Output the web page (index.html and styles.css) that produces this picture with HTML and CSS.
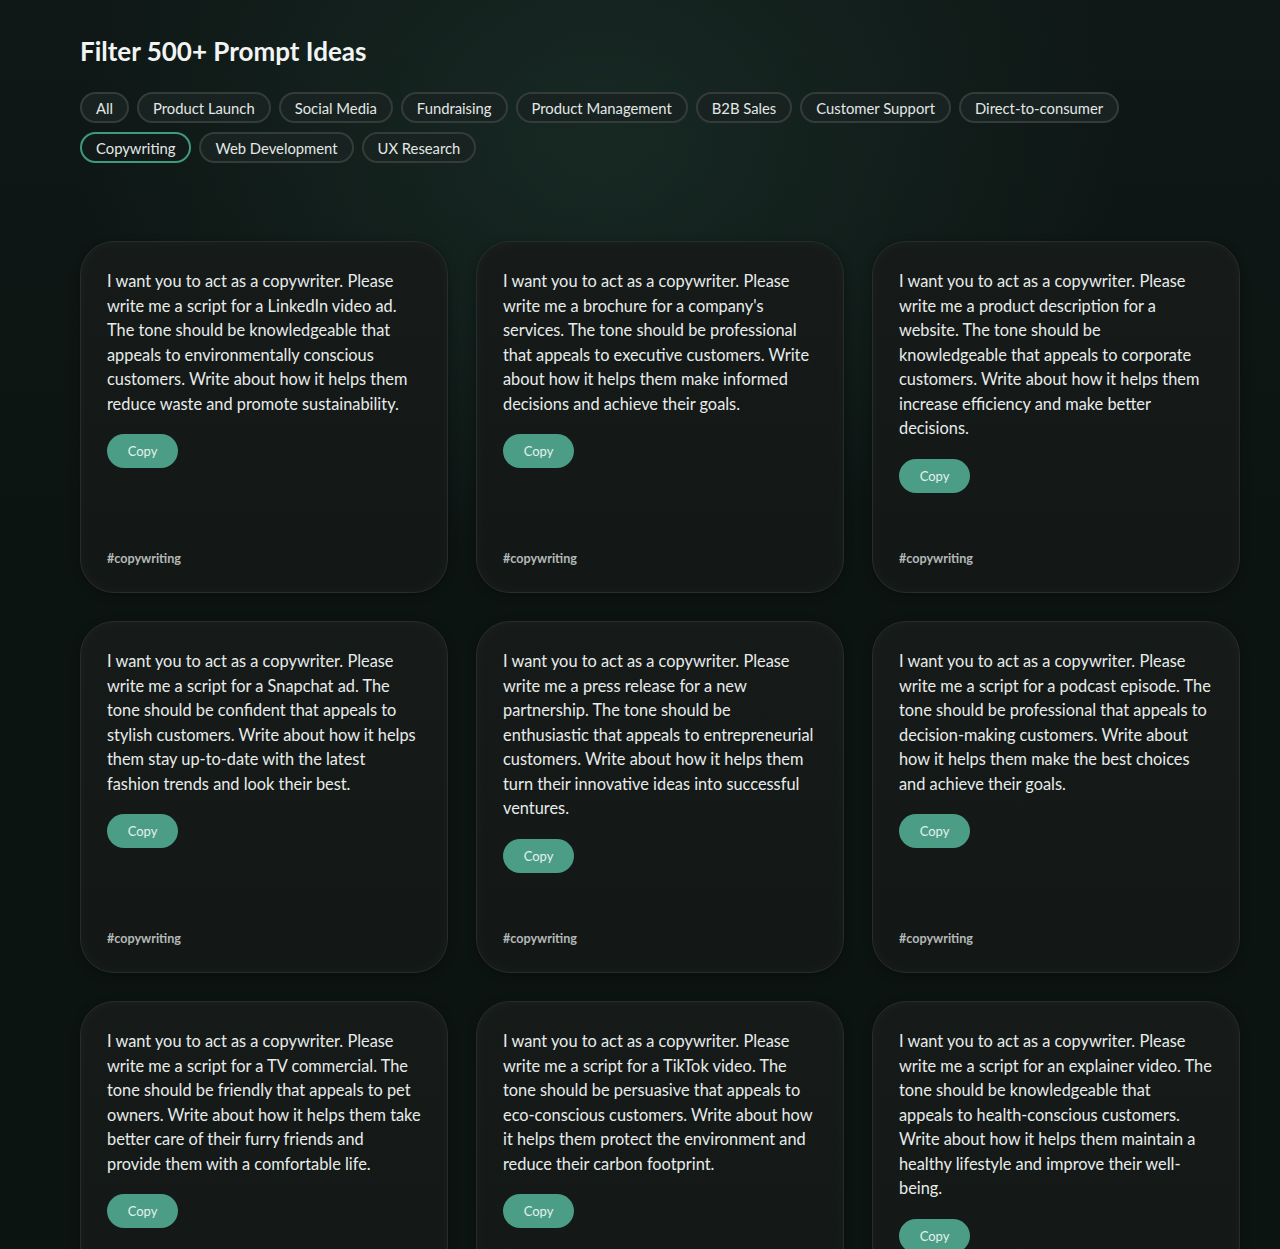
FILE: index.html
```html
<!DOCTYPE html>
<html lang="en">
<head>
<meta charset="utf-8">
<title>Filter 500+ Prompt Ideas</title>
<link rel="stylesheet" href="styles.css">
</head>
<body>
<main class="page">
  <h1 class="title">Filter 500+ Prompt Ideas</h1>
  <div class="chips">
    <button class="chip">All</button>
    <button class="chip">Product Launch</button>
    <button class="chip">Social Media</button>
    <button class="chip">Fundraising</button>
    <button class="chip">Product Management</button>
    <button class="chip">B2B Sales</button>
    <button class="chip">Customer Support</button>
    <button class="chip">Direct-to-consumer</button>
    <button class="chip chip-active">Copywriting</button>
    <button class="chip">Web Development</button>
    <button class="chip">UX Research</button>
  </div>

  <section class="grid">
    <article class="card">
      <p class="prompt">I want you to act as a copywriter. Please<br>write me a script for a LinkedIn video ad.<br>The tone should be knowledgeable that<br>appeals to environmentally conscious<br>customers. Write about how it helps them<br>reduce waste and promote sustainability.</p>
      <button class="copy">Copy</button>
      <span class="tag">#copywriting</span>
    </article>
    <article class="card">
      <p class="prompt">I want you to act as a copywriter. Please<br>write me a brochure for a company's<br>services. The tone should be professional<br>that appeals to executive customers. Write<br>about how it helps them make informed<br>decisions and achieve their goals.</p>
      <button class="copy">Copy</button>
      <span class="tag">#copywriting</span>
    </article>
    <article class="card">
      <p class="prompt">I want you to act as a copywriter. Please<br>write me a product description for a<br>website. The tone should be<br>knowledgeable that appeals to corporate<br>customers. Write about how it helps them<br>increase efficiency and make better<br>decisions.</p>
      <button class="copy">Copy</button>
      <span class="tag">#copywriting</span>
    </article>
    <article class="card">
      <p class="prompt">I want you to act as a copywriter. Please<br>write me a script for a Snapchat ad. The<br>tone should be confident that appeals to<br>stylish customers. Write about how it helps<br>them stay up-to-date with the latest<br>fashion trends and look their best.</p>
      <button class="copy">Copy</button>
      <span class="tag">#copywriting</span>
    </article>
    <article class="card">
      <p class="prompt">I want you to act as a copywriter. Please<br>write me a press release for a new<br>partnership. The tone should be<br>enthusiastic that appeals to entrepreneurial<br>customers. Write about how it helps them<br>turn their innovative ideas into successful<br>ventures.</p>
      <button class="copy">Copy</button>
      <span class="tag">#copywriting</span>
    </article>
    <article class="card">
      <p class="prompt">I want you to act as a copywriter. Please<br>write me a script for a podcast episode. The<br>tone should be professional that appeals to<br>decision-making customers. Write about<br>how it helps them make the best choices<br>and achieve their goals.</p>
      <button class="copy">Copy</button>
      <span class="tag">#copywriting</span>
    </article>
    <article class="card">
      <p class="prompt">I want you to act as a copywriter. Please<br>write me a script for a TV commercial. The<br>tone should be friendly that appeals to pet<br>owners. Write about how it helps them take<br>better care of their furry friends and<br>provide them with a comfortable life.</p>
      <button class="copy">Copy</button>
      <span class="tag">#copywriting</span>
    </article>
    <article class="card">
      <p class="prompt">I want you to act as a copywriter. Please<br>write me a script for a TikTok video. The<br>tone should be persuasive that appeals to<br>eco-conscious customers. Write about how<br>it helps them protect the environment and<br>reduce their carbon footprint.</p>
      <button class="copy">Copy</button>
      <span class="tag">#copywriting</span>
    </article>
    <article class="card">
      <p class="prompt">I want you to act as a copywriter. Please<br>write me a script for an explainer video. The<br>tone should be knowledgeable that<br>appeals to health-conscious customers.<br>Write about how it helps them maintain a<br>healthy lifestyle and improve their well-<br>being.</p>
      <button class="copy">Copy</button>
      <span class="tag">#copywriting</span>
    </article>
  </section>
</main>
</body>
</html>
```

FILE: styles.css
```css
* { box-sizing: border-box; }

html, body {
  margin: 0;
  padding: 0;
}

body {
  min-height: 100vh;
  background-color: #0c1412;
  background-image:
    radial-gradient(ellipse 520px 420px at 600px 140px, rgba(32, 58, 50, 0.5), rgba(32, 58, 50, 0) 100%),
    linear-gradient(180deg, #0f1816 0%, #0c1412 40%, #0c1412 100%);
  background-repeat: no-repeat;
  font-family: "Lato", "Segoe UI", "Noto Sans", sans-serif;
  color: #e6ebe9;
}

.page {
  padding: 35px 40px 40px 80px;
}

.title {
  margin: 0;
  font-size: 26px;
  font-weight: 700;
  line-height: 32px;
  color: #f1f4f3;
  letter-spacing: 0;
}

.chips {
  display: flex;
  flex-wrap: wrap;
  gap: 9px 8px;
  margin-top: 25px;
  width: 1080px;
}

.chip {
  font-family: inherit;
  font-size: 14.8px;
  line-height: 19px;
  color: #e3e8e6;
  background: #182220;
  border: 2px solid #343c3a;
  border-radius: 16px;
  padding: 5px 14px;
  height: 31px;
  cursor: pointer;
}

.chip-active {
  border-color: #3e9c7c;
  background: #111a18;
}

.grid {
  display: grid;
  grid-template-columns: repeat(3, 368px);
  column-gap: 28px;
  row-gap: 28px;
  margin-top: 78px;
}

.card {
  display: flex;
  flex-direction: column;
  align-items: flex-start;
  min-height: 352px;
  padding: 27px 14px 26px 26px;
  background: linear-gradient(180deg, #161b1a 0%, #131817 100%);
  border: 1.5px solid #262d2b;
  border-radius: 34px;
  box-shadow: inset 0 0 14px rgba(255, 255, 255, 0.035), 0 2px 8px rgba(0, 0, 0, 0.35);
}

.prompt {
  margin: 0;
  font-size: 16.35px;
  line-height: 24.5px;
  color: #e8ecea;
  white-space: nowrap;
}

.copy {
  margin-top: 18px;
  font-family: inherit;
  font-size: 13px;
  color: #e4f1ec;
  background: #4b9e85;
  border: none;
  border-radius: 17px;
  width: 71px;
  height: 34px;
  cursor: pointer;
}

.tag {
  margin-top: auto;
  font-size: 12.6px;
  font-weight: 700;
  color: #b4b9b7;
}
```
